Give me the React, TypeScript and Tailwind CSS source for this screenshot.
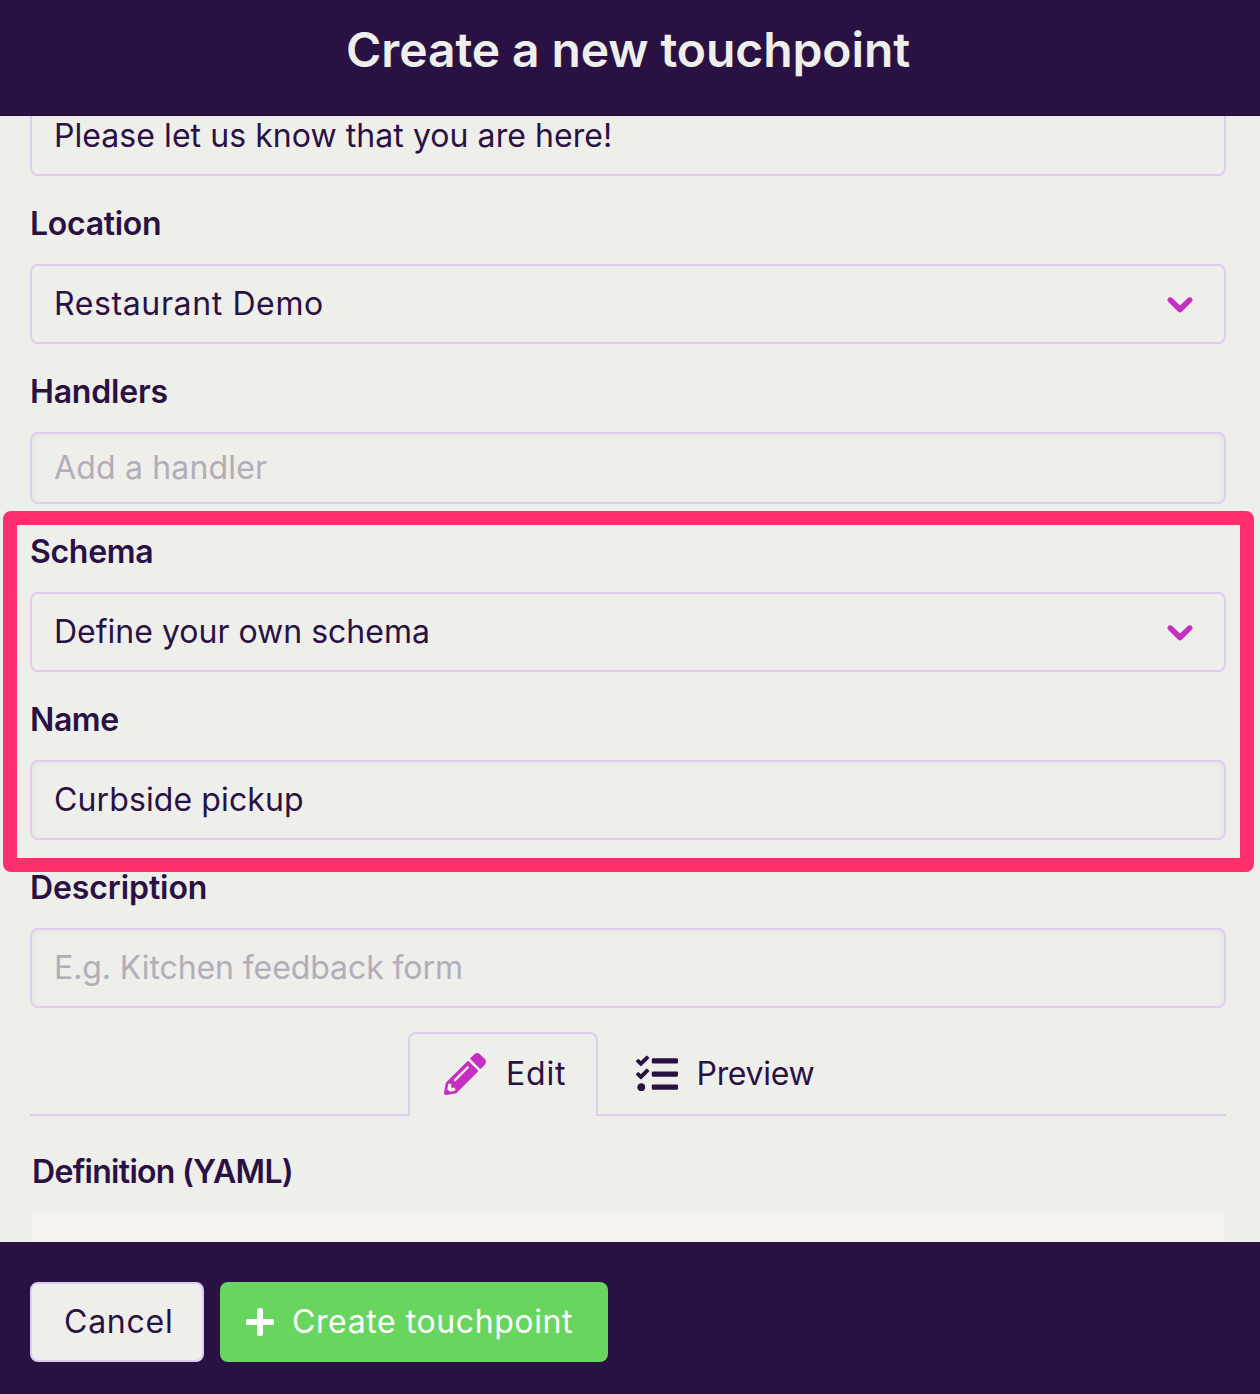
import type { ReactNode } from "react";
import { FaPencilAlt, FaPlus, FaTasks } from "react-icons/fa";

function Chevron() {
  return (
    <svg viewBox="0 0 26 17" className="h-[17px] w-[26px] text-[#c530c0]">
      <path
        d="M2.6 0.9 Q4 0.9 5.2 2 L13 9.4 L20.8 2 Q22 0.9 23.4 0.9 L25.4 3 Q26 4.4 25 5.6 L14.8 15.7 Q13 17.2 11.2 15.7 L1 5.6 Q0 4.4 0.6 3 Z"
        fill="currentColor"
      />
    </svg>
  );
}

function Label({ children, className = "" }: { children: ReactNode; className?: string }) {
  return (
    <div
      className={`h-[88px] shrink-0 pt-7 text-[32px] leading-10 font-semibold whitespace-nowrap ${className}`}
    >
      {children}
    </div>
  );
}

type FieldProps = {
  children: ReactNode;
  className?: string;
  height?: string;
  select?: boolean;
  inset?: boolean;
  placeholder?: boolean;
};

function Field({ children, className = "", height = "h-20", select, inset, placeholder }: FieldProps) {
  return (
    <div
      className={`flex shrink-0 items-center justify-between rounded-lg border-2 border-[#dfccf2] pr-[31px] pl-[22px] ${height} ${
        inset ? "shadow-[inset_0_2px_6px_rgba(42,17,67,0.05)]" : ""
      }`}
    >
      <span
        className={`text-[32px] leading-9 whitespace-nowrap ${placeholder ? "text-[#b3adb9]" : ""} ${className}`}
      >
        {children}
      </span>
      {select && <Chevron />}
    </div>
  );
}

export default function App() {
  return (
    <div className="relative flex h-[1394px] w-[1260px] flex-col overflow-hidden bg-[#eeefea] font-['Inter',sans-serif] text-[#2a1143]">
      <header className="flex h-[116px] shrink-0 justify-center border-b border-[#210b38] bg-[#2a1143] pt-[20px] pr-[4px]">
        <h1 className="text-[48px] leading-[60px] font-semibold tracking-[-0.1px] text-[#eeefea]">
          Create a new touchpoint
        </h1>
      </header>

      <main className="flex h-[1126px] shrink-0 flex-col overflow-hidden pr-[34px] pl-[30px]">
        <div className="-mt-5 shrink-0">
          <Field className="tracking-[0.06px]">Please let us know that you are here!</Field>
        </div>
        <Label className="tracking-[-0.3px]">Location</Label>
        <Field select className="tracking-[0.62px]">Restaurant Demo</Field>
        <Label className="tracking-[-0.2px]">Handlers</Label>
        <Field inset placeholder height="h-[72px]" className="tracking-[0.16px]">Add a handler</Field>
        <Label className="tracking-[-0.3px]">Schema</Label>
        <Field select>Define your own schema</Field>
        <Label className="tracking-[-0.4px]">Name</Label>
        <Field inset className="tracking-[0.11px]">Curbside pickup</Field>
        <Label className="tracking-[-0.1px]">Description</Label>
        <Field inset placeholder className="tracking-[-0.09px]">E.g. Kitchen feedback form</Field>

        <div className="mt-6 flex h-[84px] shrink-0 text-[32px] leading-10">
          <div className="w-[379px] border-b-2 border-[#dfccf2]" />
          <div className="-ml-px flex w-[190px] items-center rounded-t-lg border-2 border-b-0 border-[#dfccf2] pb-[2px] pl-[34px]">
            <FaPencilAlt className="size-[42px] text-[#c530c0]" />
            <span className="ml-5 tracking-[0.81px]">Edit</span>
          </div>
          <div className="-ml-px flex flex-1 items-center border-b-2 border-[#dfccf2] pt-[2px] pl-[39px]">
            <FaTasks className="size-[42px]" />
            <span className="ml-[18.5px] tracking-[-0.3px]">Preview</span>
          </div>
        </div>

        <div className="shrink-0 px-0.5">
          <div className="h-24 pt-9 text-[32px] leading-10 font-semibold tracking-[-0.7px]">
            Definition (YAML)
          </div>
          <div className="h-20 rounded-lg bg-[#f5f1ee]" />
        </div>
      </main>

      <footer className="flex flex-1 gap-4 bg-[#2a1143] pt-10 pl-[30px] text-[32px] leading-10">
        <button className="flex h-20 w-[174px] items-center rounded-lg border-2 border-[#dfccf2] bg-[#eeefea] pl-8 tracking-[0.76px]">
          Cancel
        </button>
        <button className="flex h-20 w-[388px] items-center rounded-lg bg-[#68d55f] pl-6 text-white">
          <FaPlus className="size-8" />
          <span className="ml-4 tracking-[0.59px] whitespace-nowrap">Create touchpoint</span>
        </button>
      </footer>

      <div className="pointer-events-none absolute top-[511px] left-[2.5px] h-[361px] w-[1251.5px] rounded-lg border-[14px] border-[#ff2f6d]" />
    </div>
  );
}
